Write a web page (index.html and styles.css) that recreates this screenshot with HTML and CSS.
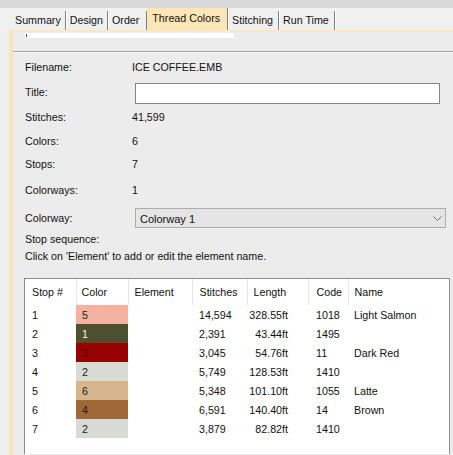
FILE: index.html
```html
<!DOCTYPE html>
<html>
<head>
<meta charset="utf-8">
<link rel="stylesheet" href="styles.css">
</head>
<body>
<div class="topband"></div>
<div class="tabs">
  <div class="tab">Summary</div>
  <div class="tab">Design</div>
  <div class="tab order">Order</div>
  <div class="tab active">Thread Colors</div>
  <div class="tab stitch">Stitching</div>
  <div class="tab run">Run Time</div>
</div>
<div class="panel">
  <div class="stub"><span class="tick"></span></div>
  <div class="rule"></div>
  <div class="form">
    <div class="row h24"><span class="label">Filename:</span><span class="value">ICE COFFEE.EMB</span></div>
    <div class="row h25"><span class="label">Title:</span><span class="textbox"></span></div>
    <div class="row h26"><span class="label">Stitches:</span><span class="value">41,599</span></div>
    <div class="row h21"><span class="label">Colors:</span><span class="value">6</span></div>
    <div class="row h26"><span class="label">Stops:</span><span class="value">7</span></div>
    <div class="row h26"><span class="label">Colorways:</span><span class="value">1</span></div>
    <div class="row h30"><span class="label">Colorway:</span>
      <div class="select"><span>Colorway 1</span>
        <svg class="chev" width="9" height="6" viewBox="0 0 9 6"><path d="M0.5 0.5 L4.5 4.5 L8.5 0.5" fill="none" stroke="#6d6d6d" stroke-width="1"/></svg>
      </div>
    </div>
    <div class="row h11"><span class="label">Stop sequence:</span></div>
    <div class="row h24"><span class="label wide">Click on 'Element' to add or edit the element name.</span></div>
  </div>
  <div class="listbox">
    <table class="grid">
      <colgroup>
        <col class="c-stop"><col class="c-color"><col class="c-elem"><col class="c-stitch"><col class="c-len"><col class="c-code"><col>
      </colgroup>
      <thead>
        <tr><th>Stop #</th><th class="pc">Color</th><th>Element</th><th class="ps">Stitches</th><th>Length</th><th class="pcode">Code</th><th>Name</th></tr>
      </thead>
      <tbody>
        <tr><td>1</td><td class="sw salmon">5</td><td></td><td class="ps">14,594</td><td class="len">328.55ft</td><td class="pcode">1018</td><td>Light Salmon</td></tr>
        <tr><td>2</td><td class="sw olive">1</td><td></td><td class="ps">2,391</td><td class="len">43.44ft</td><td class="pcode">1495</td><td></td></tr>
        <tr><td>3</td><td class="sw red">3</td><td></td><td class="ps">3,045</td><td class="len">54.76ft</td><td class="pcode">11</td><td>Dark Red</td></tr>
        <tr><td>4</td><td class="sw grey">2</td><td></td><td class="ps">5,749</td><td class="len">128.53ft</td><td class="pcode">1410</td><td></td></tr>
        <tr><td>5</td><td class="sw latte">6</td><td></td><td class="ps">5,348</td><td class="len">101.10ft</td><td class="pcode">1055</td><td>Latte</td></tr>
        <tr><td>6</td><td class="sw brown">4</td><td></td><td class="ps">6,591</td><td class="len">140.40ft</td><td class="pcode">14</td><td>Brown</td></tr>
        <tr><td>7</td><td class="sw grey">2</td><td></td><td class="ps">3,879</td><td class="len">82.82ft</td><td class="pcode">1410</td><td></td></tr>
      </tbody>
    </table>
  </div>
</div>
</body>
</html>
```
FILE: styles.css
```css
html, body {
  margin: 0;
  padding: 0;
}
body {
  width: 453px;
  height: 455px;
  overflow: hidden;
  background: #efefef;
  font-family: "Liberation Sans", Arial, sans-serif;
  font-size: 10.7px;
  color: #111;
}
.topband {
  height: 8px;
  background: #d9d9d9;
}
.tabs {
  display: flex;
  align-items: flex-end;
  height: 22px;
  padding-left: 11px;
  background: #f0f0f0;
}
.tab {
  height: 19px;
  line-height: 18px;
  padding: 0 4px 0 4px;
  font-size: 10.7px;
  border-right: 1px solid #7f7f7f;
  box-shadow: 1px 0 0 #ffffff;
  box-sizing: border-box;
}
.tab.order {
  padding-right: 7px;
}
.tab.active {
  height: 22px;
  line-height: 20px;
  background: #fbe6b8;
  padding: 0 7px 0 5px;
}
.tab.stitch {
  padding-right: 5px;
}
.tab.run {
  padding-right: 5px;
}
.panel {
  margin-left: 9px;
  border-left: 4px solid #f6e6bd;
  border-top: 2px solid #f8e9c3;
  background: #ececec;
  height: 423px;
}
.stub {
  margin: 1px 0 0 12px;
  width: 209px;
  height: 5px;
  background: #ffffff;
  position: relative;
}
.tick {
  position: absolute;
  left: 1px;
  top: 1px;
  width: 1px;
  height: 3px;
  background: #555;
}
.rule {
  margin-top: 13px;
  height: 1px;
  background: #a3a3a3;
  border-bottom: 1px solid #f7f7f7;
}
.form {
  padding-left: 12px;
  margin-top: 2px;
}
.row {
  display: flex;
  align-items: center;
}
.h11 { height: 11px; }
.h21 { height: 21px; }
.h24 { height: 24px; }
.h25 { height: 25px; }
.h26 { height: 26px; }
.h30 { height: 30px; }
.label {
  width: 107px;
  flex: none;
  white-space: nowrap;
}
.label.wide {
  width: auto;
}
.textbox {
  display: block;
  width: 305px;
  height: 21px;
  box-sizing: border-box;
  margin: 3px 0 0 3px;
  background: #fff;
  border: 1px solid #858585;
}
.select {
  display: flex;
  align-items: center;
  justify-content: space-between;
  width: 311px;
  height: 20px;
  box-sizing: border-box;
  margin-left: 3px;
  padding: 1px 3px 0 4px;
  background: #e5e5e5;
  border: 1px solid #adadad;
  font-size: 11px;
}
.chev {
  display: block;
}
.listbox {
  margin: 10px 0 0 11px;
  width: 426px;
  height: 176px;
  box-sizing: border-box;
  background: #fff;
  border: 1px solid #8c8c8c;
  border-bottom: none;
}
.grid {
  border-collapse: collapse;
  table-layout: fixed;
  width: 424px;
}
.c-stop { width: 51px; }
.c-color { width: 52px; }
.c-elem { width: 64px; }
.c-stitch { width: 55px; }
.c-len { width: 61px; }
.c-code { width: 40px; }
.grid th {
  height: 26px;
  padding: 0 0 0 6px;
  font-weight: normal;
  text-align: left;
  border-right: 1px solid #e5e5e5;
  white-space: nowrap;
}
.grid th:first-child {
  padding-left: 7px;
}
.grid th:last-child {
  border-right: none;
}
.grid td {
  height: 19px;
  padding: 0 0 0 6px;
  white-space: nowrap;
}
.grid td:first-child {
  padding-left: 7px;
}
.grid .pc { padding-left: 5px; }
.grid .ps { padding-left: 7px; }
.grid .pcode { padding-left: 8px; }
.grid td.len {
  text-align: right;
  padding: 0 20px 0 0;
}
.sw { color: #222; }
.salmon { background: #f3b2a2; }
.olive { background: #4e4f2f; color: #f4f4f0; }
.red { background: #980202; color: #5c0000; }
.grey { background: #d8dad4; }
.latte { background: #d5b68c; }
.brown { background: #9e6838; color: #2a1a0c; }
```
